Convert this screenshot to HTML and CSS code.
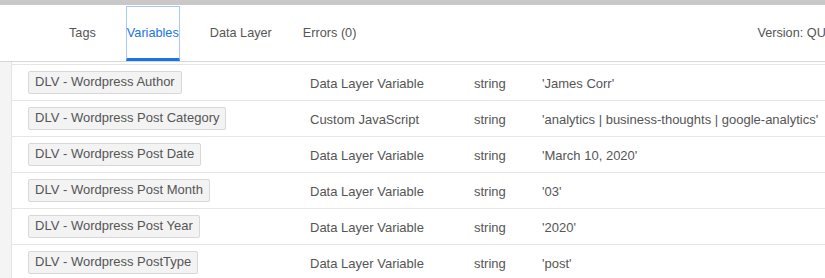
FILE: index.html
```html
<!DOCTYPE html>
<html lang="en">
<head>
    <meta charset="UTF-8">
    <title>Preview - Variables</title>
    <link rel="stylesheet" href="styles.css">
</head>
<body>
<div class="topbar"></div>

<div class="header">
    <div class="tabs">
        <div class="tab">Tags</div>
        <div class="tab active">Variables</div>
        <div class="tab">Data Layer</div>
        <div class="tab">Errors (0)</div>
    </div>
    <span class="version">Version: QUICK_PREVIEW</span>
</div>

<div class="main">
    <div class="sidebar"></div>
    <div class="content">
        <div class="rows">
            <div class="row">
                <span class="chip">DLV - Wordpress Author</span>
                <span class="cell">Data Layer Variable</span>
                <span class="cell">string</span>
                <span class="cell">'James Corr'</span>
            </div>
            <div class="row">
                <span class="chip">DLV - Wordpress Post Category</span>
                <span class="cell">Custom JavaScript</span>
                <span class="cell">string</span>
                <span class="cell">'analytics | business-thoughts | google-analytics'</span>
            </div>
            <div class="row">
                <span class="chip">DLV - Wordpress Post Date</span>
                <span class="cell">Data Layer Variable</span>
                <span class="cell">string</span>
                <span class="cell">'March 10, 2020'</span>
            </div>
            <div class="row">
                <span class="chip">DLV - Wordpress Post Month</span>
                <span class="cell">Data Layer Variable</span>
                <span class="cell">string</span>
                <span class="cell">'03'</span>
            </div>
            <div class="row">
                <span class="chip">DLV - Wordpress Post Year</span>
                <span class="cell">Data Layer Variable</span>
                <span class="cell">string</span>
                <span class="cell">'2020'</span>
            </div>
            <div class="row">
                <span class="chip">DLV - Wordpress PostType</span>
                <span class="cell">Data Layer Variable</span>
                <span class="cell">string</span>
                <span class="cell">'post'</span>
            </div>
        </div>
    </div>
</div>
</body>
</html>
```

FILE: styles.css
```css
body {
    margin: 0;
    font-family: "Liberation Sans", Arial, sans-serif;
    font-size: 13px;
    color: #555;
    background: #fff;
    overflow: hidden;
}

.topbar {
    height: 5px;
    background: #c8c8c8;
}

.header {
    display: flex;
    align-items: stretch;
    height: 55px;
    padding-top: 1px;
    border-bottom: 1px solid #d6d6d6;
    white-space: nowrap;
    overflow: hidden;
}

.tabs {
    display: flex;
    gap: 29px;
    padding-left: 68px;
    flex: none;
    font-size: 12.7px;
}

.tab {
    display: flex;
    align-items: center;
    border: 1px solid transparent;
    border-bottom-width: 3px;
}

.tab.active {
    color: #1a73e8;
    border-color: #a8c7fa;
    border-bottom-color: #1a73e8;
}

.version {
    flex: none;
    align-self: center;
    margin-left: 400px;
    padding-bottom: 1px;
    font-size: 12.7px;
}

.main {
    display: flex;
    height: 216px;
}

.sidebar {
    width: 11px;
    background: #f4f4f4;
    border-right: 1px solid #e4e4e4;
    flex: none;
}

.content {
    flex: 1;
    padding-top: 2px;
}

.rows {
    border-top: 1px solid #e6e6e6;
}

.row {
    display: grid;
    grid-template-columns: 282px 164px 68px 1fr;
    align-items: center;
    height: 35px;
    padding-left: 16px;
    border-bottom: 1px solid #e6e6e6;
    white-space: nowrap;
}

.chip {
    justify-self: start;
    height: 21px;
    line-height: 20px;
    padding: 0 6px;
    background: #f3f3f3;
    border: 1px solid #d8d8d8;
    border-radius: 2px;
    margin-top: -1px;
}

.cell {
    padding-top: 2px;
}
```
